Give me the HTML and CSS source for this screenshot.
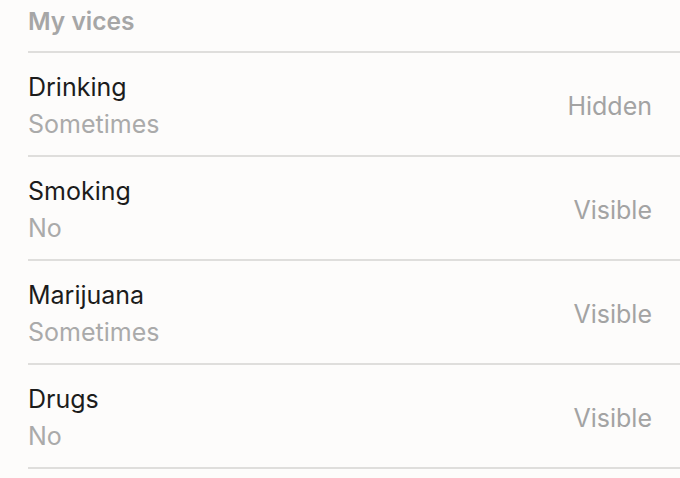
FILE: index.html
```html
<!DOCTYPE html>
<html lang="en">
<head>
<meta charset="utf-8">
<title>My vices</title>
<link rel="stylesheet" href="styles.css">
</head>
<body>
<section class="vices">
  <h2 class="vices-title">My vices</h2>
  <ul class="vice-list">
    <li class="vice">
      <div class="vice-info">
        <span class="vice-name">Drinking</span>
        <span class="vice-value">Sometimes</span>
      </div>
      <span class="vice-visibility">Hidden</span>
    </li>
    <li class="vice">
      <div class="vice-info">
        <span class="vice-name">Smoking</span>
        <span class="vice-value">No</span>
      </div>
      <span class="vice-visibility">Visible</span>
    </li>
    <li class="vice">
      <div class="vice-info">
        <span class="vice-name">Marijuana</span>
        <span class="vice-value">Sometimes</span>
      </div>
      <span class="vice-visibility">Visible</span>
    </li>
    <li class="vice">
      <div class="vice-info">
        <span class="vice-name">Drugs</span>
        <span class="vice-value">No</span>
      </div>
      <span class="vice-visibility">Visible</span>
    </li>
  </ul>
</section>
</body>
</html>
```

FILE: styles.css
```css
html, body {
  margin: 0;
  padding: 0;
  background: #fdfcfb;
}

body {
  font-family: Inter, "Noto Sans", sans-serif;
  -webkit-font-smoothing: antialiased;
}

.vices {
  padding-left: 28px;
}

.vices-title {
  margin: 0;
  height: 53px;
  box-sizing: border-box;
  padding-top: 3px;
  font-size: 24.5px;
  line-height: 37px;
  font-weight: 600;
  color: #a6a6a6;
  border-bottom: 2px solid #dfdedc;
}

.vice-list {
  list-style: none;
  margin: 0;
  padding: 0;
}

.vice {
  display: flex;
  align-items: center;
  justify-content: space-between;
  height: 104px;
  box-sizing: border-box;
  padding: 4px 28px 0 0;
  border-bottom: 2px solid #dfdedc;
}

.vice-info {
  display: flex;
  flex-direction: column;
}

.vice-name {
  font-size: 25px;
  line-height: 37px;
  color: #1c1c1c;
}

.vice-value {
  font-size: 25px;
  line-height: 37px;
  color: #aaaaaa;
}

.vice-visibility {
  font-size: 25px;
  line-height: 37px;
  color: #a3a3a3;
}
```
